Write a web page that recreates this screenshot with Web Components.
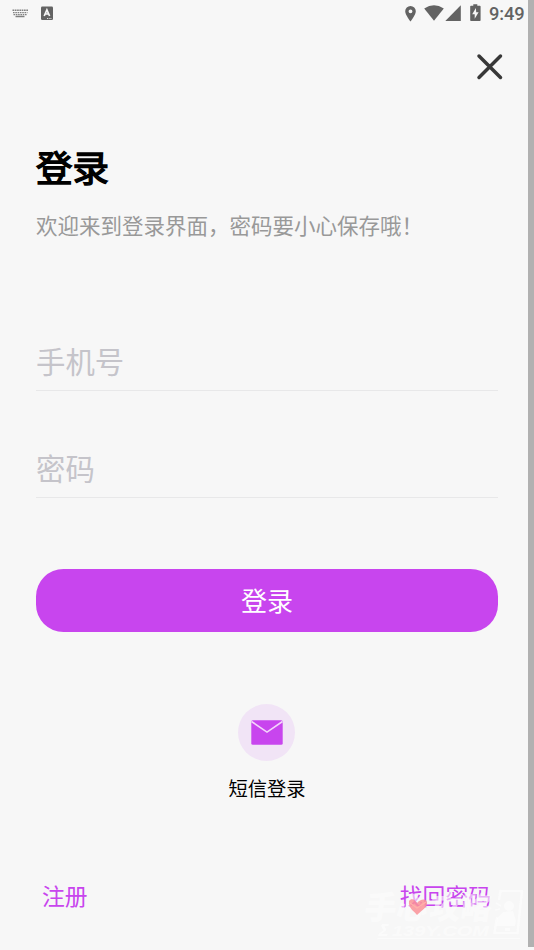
<!DOCTYPE html>
<html lang="zh-CN">
<head>
<meta charset="utf-8">
<title>登录</title>
<style>
html,body{margin:0;height:100%;background:#f7f7f7}
body{font-family:"Noto Sans CJK SC",sans-serif;overflow:hidden}
</style>
</head>
<body>
<login-screen></login-screen>
<script>
const define=(name,html)=>{
  const t=document.createElement('template');t.innerHTML=html;
  customElements.define(name,class extends HTMLElement{
    constructor(){super();this.attachShadow({mode:'open'}).append(t.content.cloneNode(true));}
  });
};

define('status-bar',`<style>
:host{display:flex;height:27px;align-items:center;padding:0 3px 0 12px;box-sizing:border-box;color:#636363}
svg{display:block;fill:currentColor;flex:none}
.sp{flex:1}
time{font:500 18.300px/27px Roboto,sans-serif;width:36px;margin-left:7px;white-space:nowrap;letter-spacing:-.1px}
</style>
<svg width="17" height="27" viewBox="0 0 17 27"><g fill="none" stroke="#808080"><path d="M.5 10.300H16" stroke-width="1.500" stroke-dasharray="1.7 .6"/><path d="M1 12.600H15.500M1.500 14.700H15" stroke-width="1.300" stroke-dasharray="1.6 .7"/><path d="M3.500 16.500H12.500" stroke-width="1.500"/></g></svg>
<svg width="13" height="27" viewBox="0 0 13 27" style="margin-left:11px"><rect x="1" y="6.500" width="12" height="13.500" rx="1.200"/><path d="M4.200 16 6.900 9.800 9.600 16M5.200 14H8.700" fill="none" stroke="#f7f7f7" stroke-width="1.700"/><path d="M7 18.500H12" stroke="#ddd" stroke-width="1" stroke-dasharray="1 .7"/></svg>
<span class="sp"></span>
<svg width="12" height="27" viewBox="0 0 12 27"><path fill-rule="evenodd" d="M5.500 6a5.300 5.300 0 0 0-5.300 5.300C.2 15 5.500 21.500 5.500 21.500S10.800 15 10.800 11.300A5.300 5.300 0 0 0 5.500 6Zm0 3.400a1.950 1.950 0 1 1 0 3.900a1.950 1.950 0 0 1 0-3.900Z"/></svg>
<svg width="20" height="27" viewBox="0 0 20 27" style="margin-left:7px"><path d="M.2 8.500Q10 1.800 19.800 8.500L10 20.700Z"/></svg>
<svg width="16" height="27" viewBox="0 0 16 27" style="margin-left:1px"><path d="M.3 21 15.800 5.200V21Z"/></svg>
<svg width="11" height="27" viewBox="0 0 11 27" style="margin-left:9px;margin-right:1px"><path fill-rule="evenodd" d="M3.300 4.200h4v1.600h2.500q.8 0 .8.800v13.600q0 .8-.8.800H1q-.8 0-.8-.8V6.600q0-.8.800-.8h2.300ZM5.900 8 2.200 14.200h2.500v4.600l3.900-6.500H6.200Z"/></svg>
<time>9:49</time>`);

define('close-button',`<style>
:host{display:flex;justify-content:flex-end;padding:26px 24px 0 0;height:56px;box-sizing:content-box}
svg{display:block}
</style><svg width="28" height="28" viewBox="0 0 28 28"><path d="M3 3 24.500 24.500M24.500 3 3 24.500" fill="none" stroke="#383838" stroke-width="3.500" stroke-linecap="round"/></svg>`);

define('page-heading',`<style>
:host{display:block}
h1{font-size:36.500px;line-height:54px;font-weight:400;-webkit-text-stroke:1.400px #000;margin:0;color:#000}
p{font-size:21.500px;line-height:32px;margin:15px 0 0;color:#999;white-space:nowrap}
</style><h1><slot name="title"></slot></h1><p><slot></slot></p>`);

define('text-field',`<style>
:host{display:block;height:59px;line-height:56px;font-size:29.400px;color:#c5c4ca;border-bottom:1px solid #e8e8e9;box-sizing:border-box}
</style><slot></slot>`);

define('primary-button',`<style>
:host{display:block;height:63px;border-radius:27.500px;background:#c845ee;color:#fff;text-align:center;font-size:26px;line-height:62px}
</style><slot></slot>`);

define('sms-login',`<style>
:host{display:flex;flex-direction:column;align-items:center;color:#000;font-size:19.300px;line-height:28px}
.c{width:57px;height:57px;border-radius:50%;background:#f1e4f6;display:flex;align-items:center;justify-content:center;margin:0 1px 13px 0}
svg{display:block}
</style><span class="c"><svg width="32" height="26" viewBox="0 0 32 26"><rect x=".3" y=".3" width="31.400" height="24.400" rx="1.500" fill="#c845ee"/><path d="M.5 1.500 16 12.100 31.500 1.500" fill="none" stroke="#f3d5fb" stroke-width="1.600"/></svg></span><slot></slot>`);

define('footer-links',`<style>
:host{display:flex;justify-content:space-between;padding:0 7px 0 6px;color:#c845ee;font-size:22.800px;line-height:34px}
</style><slot></slot>`);

define('site-watermark',`<style>
:host{position:absolute;left:364px;top:886px;width:162px;height:56px;color:rgba(253,253,253,.62);pointer-events:none}
svg{display:block;overflow:visible}
text{fill:currentColor;font-weight:900;font-family:"Noto Sans CJK SC",sans-serif}
</style><svg width="162" height="56" viewBox="0 0 162 56">
<g transform="skewX(-8)"><text x="4" y="33" font-size="32">手</text><text x="36" y="33" font-size="31">心</text><text x="69" y="33" font-size="31">攻</text><text x="100" y="33" font-size="31">略</text></g>
<text x="28" y="50" textLength="97" lengthAdjust="spacingAndGlyphs" style="font:italic 700 14.500px 'Liberation Sans',sans-serif">139Y.COM</text>
<path d="M18 38h7l-.5 2h-4l2 4-5 4h6l-.5 2H14l.5-2 5-4-2.500-4ZM14 52H156V53.300H13Z" fill="currentColor"/>
<path d="M135 14 136.500 5H158L153.500 47H130.500L133 31" fill="none" stroke="currentColor" stroke-width="2.500" stroke-linejoin="round"/>
<path d="M132 17l5 3m-6 4 5-1" stroke="currentColor" stroke-width="1.500"/>
<circle cx="145" cy="20" r="5" fill="currentColor"/><path d="M139 26 149 25 152 35 151 40H132L133 32ZM141 42h5v3h-5Z" fill="currentColor"/>
<path d="M45 15c2-3 6-2 8 2 3-4 9-5 10-1 1 5-5 8-10 13-3-4-9-7-8-14Z" fill="#fa9298" opacity=".85"/><path d="m46 17 7 5 9-6" fill="none" stroke="#ffb0aa" stroke-width="1.300"/>
</svg>`);

define('login-screen',`<style>
:host{display:grid;grid-template-columns:528px 6px;height:950px;position:relative;background:#f7f7f7}
main{display:flex;flex-direction:column}
.edge{background:#b1b1b1;height:947px}
.body{padding:31px 30px 0 36px;display:flex;flex-direction:column}
</style>
<main><status-bar></status-bar><close-button></close-button>
<div class="body">
<page-heading><span slot="title">登录</span>欢迎来到登录界面，密码要小心保存哦<span>！</span></page-heading>
<text-field style="margin-top:91px">手机号</text-field>
<text-field style="margin-top:48px">密码</text-field>
<primary-button style="margin-top:71px">登录</primary-button>
<sms-login style="margin-top:72px">短信登录</sms-login>
<footer-links style="margin-top:77px"><span>注册</span><span>找回密码</span></footer-links>
</div></main><div class="edge"></div><site-watermark></site-watermark>`);
</script>
</body>
</html>
